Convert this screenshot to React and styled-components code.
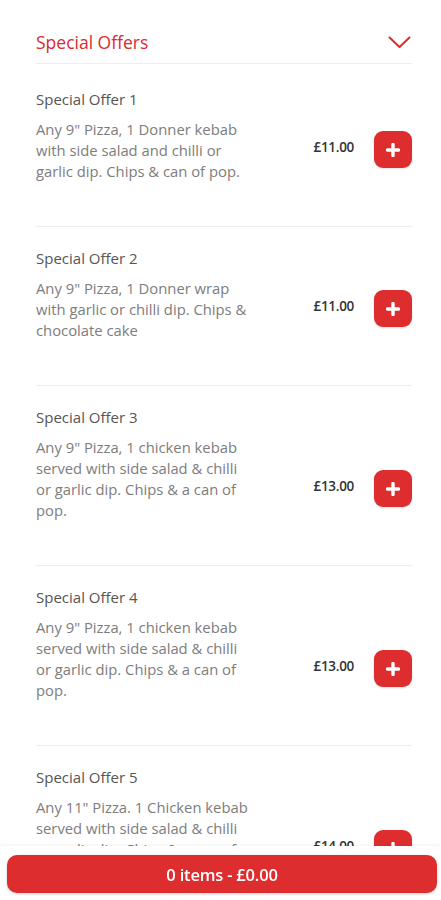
import React from 'react';
import styled, { createGlobalStyle } from 'styled-components';

const GlobalStyle = createGlobalStyle`
  body {
    margin: 0;
    background: #fff;
    font-family: "Open Sans", "Liberation Sans", sans-serif;
  }
`;

const Page = styled.div`
  padding: 0 29px 60px 36px;
`;

const SectionHeader = styled.div`
  display: flex;
  align-items: center;
  justify-content: space-between;
  padding: 30px 0 9px;
  border-bottom: 1px solid #eeeeee;
  margin-bottom: 4px;
`;

const SectionTitle = styled.h2`
  margin: 0;
  font-size: 17.5px;
  line-height: 24px;
  font-weight: 500;
  color: #de2a2e;
`;

const Chevron = styled.svg`
  width: 23px;
  height: 13px;
  margin-right: 1px;
`;

const Item = styled.div`
  display: flex;
  align-items: flex-end;
  justify-content: space-between;
  padding: 21px 0 44px;
  border-bottom: 1px solid #eeeeee;
`;

const Info = styled.div`
  width: 217px;
`;

const ItemTitle = styled.div`
  font-size: 15px;
  line-height: 21px;
  color: #555;
  margin-bottom: 9px;
`;

const ItemDesc = styled.div`
  font-size: 14.8px;
  line-height: 21px;
  color: #7d7d7d;
`;

const Actions = styled.div`
  display: flex;
  align-items: center;
  gap: 20px;
  margin-bottom: 14px;
`;

const Price = styled.span`
  font-size: 13.5px;
  font-weight: 600;
  color: #333;
  margin-bottom: 5px;
  letter-spacing: -0.3px;
`;

const AddButton = styled.button`
  width: 38px;
  height: 37px;
  border: none;
  border-radius: 9px;
  background: #de2d2f;
  display: flex;
  align-items: center;
  justify-content: center;
  padding: 0;
  cursor: pointer;
  box-shadow: 0 1px 2px rgba(0, 0, 0, 0.12);
`;

const BasketBar = styled.div`
  position: fixed;
  left: 0;
  right: 0;
  bottom: 0;
  height: 54px;
  box-sizing: border-box;
  padding: 9px 4px 6px 7px;
  background: #fff;
  box-shadow: 0 -1px 3px rgba(0, 0, 0, 0.06);
`;

const BasketButton = styled.button`
  width: 100%;
  height: 38px;
  border: none;
  border-radius: 10px;
  background: #de2d2f;
  color: #fff;
  font-family: "Open Sans", "Liberation Sans", sans-serif;
  font-size: 16.5px;
  font-weight: 600;
  letter-spacing: -0.2px;
  cursor: pointer;
  box-shadow: 0 1px 3px rgba(0, 0, 0, 0.2);
`;

const offers = [
  {
    id: 1,
    title: 'Special Offer 1',
    description: 'Any 9" Pizza, 1 Donner kebab with side salad and chilli or garlic dip. Chips & can of pop.',
    price: '£11.00'
  },
  {
    id: 2,
    title: 'Special Offer 2',
    description: 'Any 9" Pizza, 1 Donner wrap with garlic or chilli dip. Chips & chocolate cake',
    price: '£11.00'
  },
  {
    id: 3,
    title: 'Special Offer 3',
    description: 'Any 9" Pizza, 1 chicken kebab served with side salad & chilli or garlic dip. Chips & a can of pop.',
    price: '£13.00'
  },
  {
    id: 4,
    title: 'Special Offer 4',
    description: 'Any 9" Pizza, 1 chicken kebab served with side salad & chilli or garlic dip. Chips & a can of pop.',
    price: '£13.00'
  },
  {
    id: 5,
    title: 'Special Offer 5',
    description: 'Any 11" Pizza. 1 Chicken kebab served with side salad & chilli or garlic dip. Chips & a can of pop.',
    price: '£14.00'
  }
];

const PlusIcon = () => (
  <svg width="14" height="14" viewBox="0 0 14 14">
    <path d="M7 1.5v11M1.5 7h11" stroke="#fff" strokeWidth="3.4" strokeLinecap="round" />
  </svg>
);

const App = () => {
  return (
    <>
      <GlobalStyle />
      <Page>
        <SectionHeader>
          <SectionTitle>Special Offers</SectionTitle>
          <Chevron viewBox="0 0 23 13">
            <polyline points="1.5,1.5 11.5,11 21.5,1.5" fill="none" stroke="#de2a2e" strokeWidth="2" strokeLinecap="round" strokeLinejoin="round" />
          </Chevron>
        </SectionHeader>
        {offers.map(offer => (
          <Item key={offer.id}>
            <Info>
              <ItemTitle>{offer.title}</ItemTitle>
              <ItemDesc>{offer.description}</ItemDesc>
            </Info>
            <Actions>
              <Price>{offer.price}</Price>
              <AddButton aria-label="Add">
                <PlusIcon />
              </AddButton>
            </Actions>
          </Item>
        ))}
      </Page>
      <BasketBar>
        <BasketButton>0 items - £0.00</BasketButton>
      </BasketBar>
    </>
  );
};

export default App;
